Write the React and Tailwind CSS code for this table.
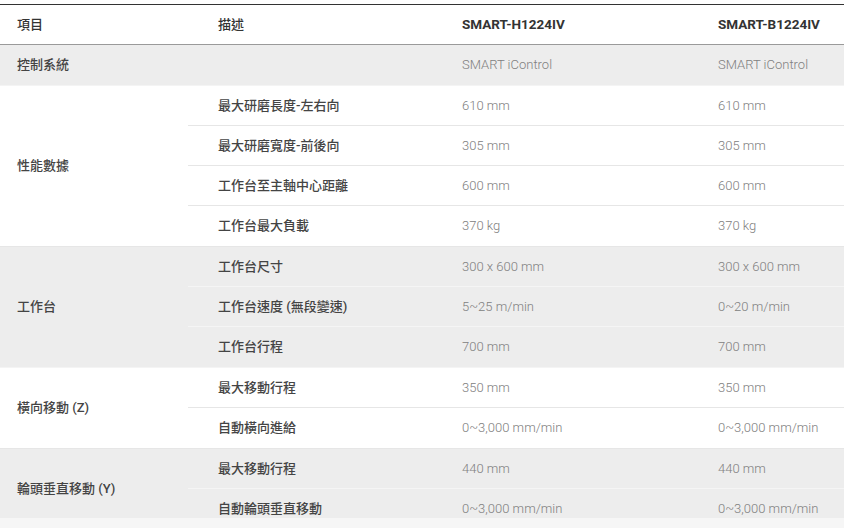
const sections = [
  {
    label: '控制系統',
    shaded: true,
    rows: [{ desc: '', h: 'SMART iControl', b: 'SMART iControl' }],
  },
  {
    label: '性能數據',
    shaded: false,
    rows: [
      { desc: '最大研磨長度-左右向', h: '610 mm', b: '610 mm' },
      { desc: '最大研磨寬度-前後向', h: '305 mm', b: '305 mm' },
      { desc: '工作台至主軸中心距離', h: '600 mm', b: '600 mm' },
      { desc: '工作台最大負載', h: '370 kg', b: '370 kg' },
    ],
  },
  {
    label: '工作台',
    shaded: true,
    rows: [
      { desc: '工作台尺寸', h: '300 x 600 mm', b: '300 x 600 mm' },
      { desc: '工作台速度 (無段變速)', h: '5~25 m/min', b: '0~20 m/min' },
      { desc: '工作台行程', h: '700 mm', b: '700 mm' },
    ],
  },
  {
    label: '橫向移動 (Z)',
    shaded: false,
    rows: [
      { desc: '最大移動行程', h: '350 mm', b: '350 mm' },
      { desc: '自動橫向進給', h: '0~3,000 mm/min', b: '0~3,000 mm/min' },
    ],
  },
  {
    label: '輪頭垂直移動 (Y)',
    shaded: true,
    rows: [
      { desc: '最大移動行程', h: '440 mm', b: '440 mm' },
      { desc: '自動輪頭垂直移動', h: '0~3,000 mm/min', b: '0~3,000 mm/min' },
    ],
  },
];

const font = { fontFamily: 'Roboto, "Noto Sans CJK TC", sans-serif' };

function Section({ section }) {
  const { label, shaded, rows } = section;
  return (
    <div
      className={`flex border-b ${shaded ? 'bg-[#ededed] border-[#f4f4f4]' : 'bg-white border-[#e6e6e6]'}`}
    >
      <div className="w-[188px] shrink-0 flex items-center pl-[17px] text-[13px] font-medium text-[#444]">
        {label}
      </div>
      <div className="flex-1 flex flex-col">
        {rows.map((r, i) => (
          <div
            key={i}
            className={`flex h-[40px] items-center ${
              i < rows.length - 1 ? (shaded ? 'border-b border-[#f5f5f5]' : 'border-b border-[#e6e6e6]') : ''
            }`}
          >
            <div className="w-[244px] shrink-0 pl-[30px] text-[13px] font-medium text-[#444]">{r.desc}</div>
            <div className="w-[256px] shrink-0 pl-[30px] text-[13px] font-light text-[#808080]">{r.h}</div>
            <div className="flex-1 pl-[30px] text-[13px] font-light text-[#808080]">{r.b}</div>
          </div>
        ))}
      </div>
    </div>
  );
}

export default function App() {
  return (
    <div className="w-[844px] h-[528px] bg-white overflow-hidden flex flex-col" style={font}>
      <div className="h-[518px] overflow-hidden pt-[4px]">
        <div className="border-t border-[#333]">
          <div className="flex h-[40px] items-center border-b border-[#9a9a9a] text-[13px] text-[#333]">
            <div className="w-[188px] shrink-0 pl-[17px] font-medium">項目</div>
            <div className="w-[244px] shrink-0 pl-[30px] font-medium">描述</div>
            <div className="w-[256px] shrink-0 pl-[30px] font-bold text-[13.5px]">SMART-H1224IV</div>
            <div className="flex-1 pl-[30px] font-bold text-[13.5px]">SMART-B1224IV</div>
          </div>
          {sections.map((s) => (
            <Section key={s.label} section={s} />
          ))}
        </div>
      </div>
      <div className="flex-1 bg-[#f6f6f6]" />
    </div>
  );
}
